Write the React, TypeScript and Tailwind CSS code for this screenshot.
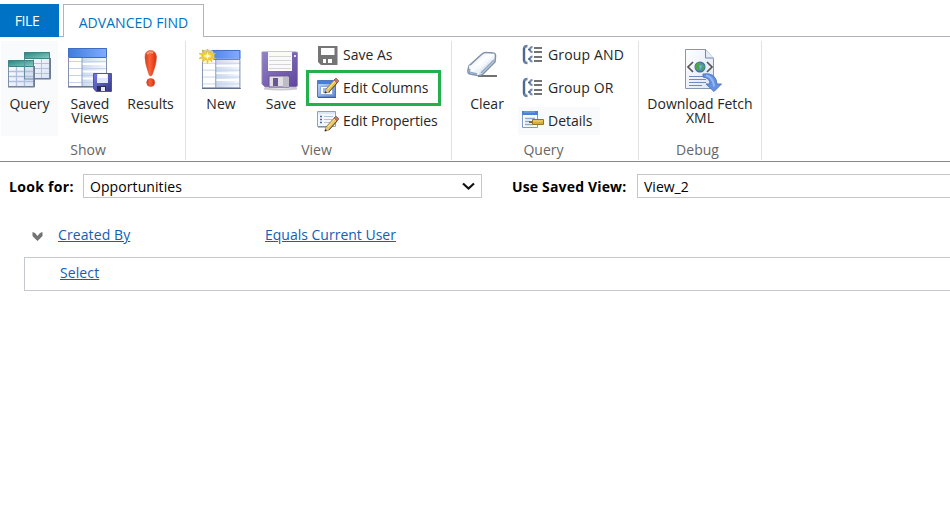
import type { ReactNode } from "react";

function QueryIcon() {
  return (
    <svg width="48" height="48" viewBox="0 0 48 48" fill="none">
      <defs>
        <linearGradient id="teal" x1="0" x2="1" y1="0" y2="1">
          <stop stopColor="#27847f" />
          <stop offset="1" stopColor="#8acbc4" />
        </linearGradient>
        <linearGradient id="sheet" x1="0" x2="1" y1="0" y2="1">
          <stop stopColor="#ffffff" />
          <stop offset="1" stopColor="#dbe4f4" />
        </linearGradient>
      </defs>
      <path d="M18.500 6.500h25v26h-25z" fill="url(#sheet)" stroke="#6f8799" />
      <path d="M19 12.500h24M19 17.500h24M19 22.500h24M19 27.500h24M27.500 13v19M35.500 13v19" stroke="#b3c1df" />
      <path d="M18.500 6.500h25v6h-25z" fill="url(#teal)" stroke="#3e8583" />
      <path d="M18 33h26.500V12" stroke="#6b7b93" />
      <path d="M2.500 14.500h25v26h-25z" fill="url(#sheet)" stroke="#7b8fa8" />
      <path d="M19 20h8v14h-8z" fill="#d7e1ef" />
      <path d="M3 25.500h24M3 30.500h24M3 35.500h24M10.500 21v19M18.500 21v19" stroke="#b0bfde" strokeWidth="1.300" />
      <path d="M2.500 14.500h25v6h-25z" fill="url(#teal)" stroke="#3e8583" />
      <path d="M2 41h26.500V20" stroke="#6b7b93" />
      <path d="M18.500 15v18h9" stroke="#688da0" />
    </svg>
  );
}

function TableArt() {
  return (
    <>
      <defs>
        <linearGradient id="header" x1="0" x2="1">
          <stop stopColor="#407bdc" />
          <stop offset="1" stopColor="#80acff" />
        </linearGradient>
        <linearGradient id="cells" x1="0" x2="1">
          <stop stopColor="#cbd8ec" />
          <stop offset="1" stopColor="#f6f9ff" />
        </linearGradient>
      </defs>
      <path d="M2 2h39v39H2z" fill="#fff" />
      <path d="M16 11h25v30H16z" fill="url(#cells)" />
      <path d="M2 15.500h39M2 22.500h39M2 29.500h39M2 36.500h39" stroke="#c5d4ed" />
      <path d="M16 18h25M16 25.500h25M16 32.500h25" stroke="#fff" strokeWidth="2" />
      <path d="M16 11v30" stroke="#849dc5" />
      <path d="M2 2h39v9H2z" fill="url(#header)" />
      <path d="M2.500 2.500h38v9h-38z" stroke="#426dbd" />
      <path d="M2.500 12v28.500h38V12" stroke="#8192ac" />
      <path d="M2 41h39.500" stroke="#4e617b" />
    </>
  );
}

function SavedViewsIcon() {
  return (
    <svg width="48" height="48" viewBox="0 0 48 48" fill="none">
      <TableArt />
      <defs>
        <linearGradient id="smalldisk" x2="1" y2="1">
          <stop stopColor="#777be9" />
          <stop offset="1" stopColor="#353587" />
        </linearGradient>
      </defs>
      <path d="M27.500 27.500h18v18H30l-2.500-3z" fill="url(#smalldisk)" stroke="#5450ac" />
      <path d="M31 28h11v9H31z" fill="#dfe8ff" />
      <path d="M32 28h9v4h-9z" fill="#fff" />
      <path d="M31 40h9v5H31z" fill="#292b58" />
      <path d="M35 41h4v4h-4z" fill="#e8e9f2" />
    </svg>
  );
}

function ResultsIcon() {
  return (
    <svg width="48" height="48" viewBox="0 0 48 48">
      <defs>
        <linearGradient id="alert" x1="0" x2="1">
          <stop stopColor="#c73d20" />
          <stop offset=".4" stopColor="#ff6034" />
          <stop offset="1" stopColor="#d22e10" />
        </linearGradient>
      </defs>
      <path d="M18 11Q18 4.500 23.500 4.500T29.500 11Q29.500 18 25.500 28Q25 30 23.500 30T21.500 27Q18 17 18 11Z" fill="url(#alert)" stroke="#ca573d" strokeWidth=".6" />
      <circle cx="23.700" cy="36.500" r="4" fill="url(#alert)" stroke="#bd452f" strokeWidth=".6" />
      <path d="M20 8q3-3 6-1" stroke="#ff9875" strokeWidth="2" fill="none" />
    </svg>
  );
}

function NewIcon() {
  return (
    <svg width="48" height="48" viewBox="0 0 48 48" fill="none">
      <g transform="translate(3 2) scale(.985)"><TableArt /></g>
      <circle cx="10.500" cy="10" r="7" fill="#fff7b0" fillOpacity=".7" />
      <path d="m10.500 3 1 4.500L15 4l-1.500 4 5-.5-4 2.500 4 2.500-5-.5L15 16l-3.500-3.500-1 5-1-5L5.500 16 7 12l-5 .5L6 10 2 7.500l5 .5-1.500-4 4 3.500Z" fill="#f7d63c" stroke="#e5bc28" strokeWidth=".8" />
      <path d="m10.500 6 1 3 3 1-3 1-1 3-1-3-3-1 3-1Z" fill="#fffde0" />
    </svg>
  );
}

function SaveIcon() {
  return (
    <svg width="48" height="48" viewBox="0 0 48 48" fill="none">
      <defs>
        <linearGradient id="purpledisk" x2="1" y2="1">
          <stop stopColor="#9282c9" />
          <stop offset="1" stopColor="#60449d" />
        </linearGradient>
      </defs>
      <path d="M7 42.500q17 2 33 0" stroke="#cbc9d0" strokeWidth="2" />
      <path d="M5 6h34q1.500 0 1.500 1v32q0 2-2 2H8l-3-3Z" fill="url(#purpledisk)" stroke="#9a8bbb" />
      <path d="M11 6h24v19H11z" fill="#fafafa" />
      <path d="M12 10.500h22M12 14.500h22M12 18.500h22M12 22.500h22" stroke="#d5d5d8" />
      <path d="M12 30h20v11H12z" fill="#dfdfe4" stroke="#6b5791" />
      <path d="M16 32h5v8h-5z" fill="#6a5595" />
      <path d="M26 31h6v10h-6z" fill="#bebdc7" />
      <path d="M37 9h2v2h-2z" fill="#e4ddef" />
    </svg>
  );
}

function SaveAsIcon() {
  return (
    <svg width="22" height="22" viewBox="0 0 22 22">
      <path d="M1 2h19.500v19H4l-3-3V2Zm3 2v7h13.500V4H4Zm2 11v4h3v-4H6Zm5 0v4h4v-4h-4Z" fill="#757575" fillRule="evenodd" />
    </svg>
  );
}

function Pencil() {
  return (
    <>
      <path d="m8 16 1-4L18 2l3 3-9 10Z" fill="#e8c25b" stroke="#8b713e" strokeWidth=".8" />
      <path d="m17 3 2-2 3 3-2 2Z" fill="#bd7771" stroke="#905650" strokeWidth=".7" />
      <path d="m8 16 1-4 3 3Z" fill="#e4c598" />
      <path d="m7.500 16.500 1-2.500 1.500 1.500Z" fill="#242424" />
      <path d="m11 12 7-8" stroke="#ffe79b" />
      <path d="m12 15 8-9" stroke="#5b4a31" />
    </>
  );
}

function EditColumnsIcon() {
  return (
    <svg width="22" height="22" viewBox="0 0 22 22" fill="none">
      <defs>
        <linearGradient id="windowblue" x2="1" y2="1">
          <stop stopColor="#c5d9fb" />
          <stop offset="1" stopColor="#5c87d5" />
        </linearGradient>
      </defs>
      <path d="M.5 3.500h18V20H.5z" fill="url(#windowblue)" stroke="#5277bd" />
      <path d="M1 4h17v3H1z" fill="#477ee1" />
      <path d="M3.500 9.500h12v8h-12z" fill="#fff" stroke="#8baae0" />
      <path d="M6 11h7v5H6z" fill="#98b7ea" />
      <path d="M1 20.500h18" stroke="#375c9f" />
      <Pencil />
    </svg>
  );
}

function EditPropertiesIcon() {
  return (
    <svg width="22" height="22" viewBox="0 0 22 22" fill="none">
      <path d="M.5 1.500h18v15H.5z" fill="#f4f7fc" stroke="#91a4b6" />
      <path d="M1 2h17v2H1z" fill="#d9e7f8" />
      <path d="M3 6.500h2M3 9.500h2M3 12.500h2" stroke="#466aaa" strokeWidth="1.500" />
      <path d="M7 6.500h9M7 9.500h8M7 12.500h6" stroke="#b4c2d5" />
      <path d="M1 17h12" stroke="#687f95" />
      <g transform="translate(0 5)"><Pencil /></g>
    </svg>
  );
}

function EraserIcon() {
  return (
    <svg width="48" height="48" viewBox="0 0 48 48">
      <defs>
        <linearGradient id="eraser" x2="1" y2="1">
          <stop stopColor="#cfe1fa" />
          <stop offset=".45" stopColor="#fff" />
          <stop offset="1" stopColor="#adbfd5" />
        </linearGradient>
      </defs>
      <path d="M15 30h19" stroke="#424242" strokeWidth="1.500" />
      <path d="M19 8q2-2 5-1.500l6 .5q3 .5 2.500 4l-.5 5-12 12q-2 2-5 1.500L7 28q-2.500-.5-2-4l1-4Z" fill="url(#eraser)" stroke="#8190a5" strokeWidth="1.500" />
      <path d="M6 20.500 16 22 31 8" fill="none" stroke="#f7fbff" strokeWidth="2.200" />
      <path d="m16 22-1 7" fill="none" stroke="#f1f6fd" strokeWidth="1.500" />
      <path d="m7 23-1 3 8 2M18 27 31 14" fill="none" stroke="#8da8c9" strokeWidth="1.500" />
    </svg>
  );
}

function GroupIcon() {
  return (
    <svg width="22" height="22" viewBox="0 0 22 22" fill="none">
      <path d="M5.500 2Q2 2 2 5v11q0 3 3.500 3" stroke="#6b81a2" strokeWidth="2.500" />
      <path d="M2 4v13" stroke="#45618b" strokeWidth="1.500" />
      <path d="M10.500 3Q8 3 8 5.500T10.500 8M10.500 12.500Q8 12.500 8 15t2.500 2.500" stroke="#718aaf" strokeWidth="2" />
      <path d="M6 5.500h2M6 15h2" stroke="#405b82" strokeWidth="1.500" />
      <path d="M12 4h8M12 8h8M12 13h8M12 17h8" stroke="#454545" strokeWidth="1.600" />
    </svg>
  );
}

function DetailsIcon() {
  return (
    <svg width="22" height="22" viewBox="0 0 22 22" fill="none">
      <path d="M.5 1.500h15v16H.5z" fill="#f9fcff" stroke="#7f9acd" />
      <path d="M0 1h16v4H0z" fill="#4b80d7" />
      <path d="M2 2h11" stroke="#83adee" />
      <path d="M3 8.500h10M3 11.500h5M3 14.500h8" stroke="#90a7cb" strokeWidth="1.500" />
      <path d="M7 12h5" stroke="#8a671e" strokeWidth="2" />
      <path d="M10.500 9.500h11v5h-11z" fill="#d4ad3d" stroke="#977428" />
      <path d="M11 11h10" stroke="#f7dd83" />
    </svg>
  );
}

function DownloadIcon() {
  return (
    <svg width="48" height="48" viewBox="0 0 48 48" fill="none">
      <defs>
        <linearGradient id="paper" x2="1" y2="1">
          <stop stopColor="#fff" />
          <stop offset="1" stopColor="#dbe5f3" />
        </linearGradient>
        <radialGradient id="globe">
          <stop stopColor="#83c4f0" />
          <stop offset="1" stopColor="#355faf" />
        </radialGradient>
      </defs>
      <path d="M9.500 3.500h20l8 9v30h-28z" fill="url(#paper)" stroke="#8197b5" />
      <path d="M29.500 3.500V12h8" fill="#e5edf8" stroke="#7188aa" />
      <path d="m17 16-5 5 5 5M31 16l5 5-5 5" stroke="#555" strokeWidth="1.700" />
      <circle cx="24" cy="21" r="5.500" fill="url(#globe)" />
      <path d="m20 18 3-2 2 2-2 2 1 2-2 3-3-3Zm6-1 3 3-1 3-2 2-1-3 2-2Z" fill="#4ba749" />
      <path d="M13 30.500h14M13 33.500h17M13 36.500h17M13 39.500h13" stroke="#7189bd" />
      <path d="M27 28q13-2 14 10h4.500l-7.500 7.500-8-7.500h4q0-6-7-7Z" fill="#6591e0" stroke="#4e78c6" />
      <path d="M30 29.500q7 1 8 11" stroke="#95b7f5" strokeWidth="2" />
    </svg>
  );
}

function BigButton({ icon, children, className }: { icon: ReactNode; children: ReactNode; className: string }) {
  return (
    <button className={`flex h-[95px] flex-col items-center pt-[5px] ${className}`}>
      {icon}
      <span className="mt-[3px] whitespace-nowrap text-center text-[14px] leading-[14px]">{children}</span>
    </button>
  );
}

function SmallButton({ icon, children, className }: { icon: ReactNode; children: ReactNode; className: string }) {
  return (
    <button className={`flex h-7 items-center gap-1 ${className}`}>
      <span className="shrink-0">{icon}</span>
      <span className="whitespace-nowrap text-[14px] leading-5">{children}</span>
    </button>
  );
}

function Group({ label, children, className, labelClass }: { label: string; children: ReactNode; className: string; labelClass: string }) {
  return (
    <section className={`flex h-[119px] flex-col border-r border-[#e1e1e1] ${className}`}>
      <div className="flex h-[95px]">{children}</div>
      <div className={`pt-1 text-center text-[14px] leading-5 text-[#666] ${labelClass}`}>{label}</div>
    </section>
  );
}

export default function App() {
  return (
    <main className="h-[517px] w-[950px] overflow-hidden bg-white font-['Open_Sans','Noto_Sans',sans-serif] text-[14px] text-[#262626]">
      <nav className="flex h-[37px] pt-1">
        <button className="h-[33px] w-[59px] bg-[#0072c6] pr-[5px] text-[14px] tracking-[-0.4px] text-white">FILE</button>
        <div className="w-1 border-b border-[#b1b5ba]" />
        <button className="w-[141px] border-x border-t border-[#b1b5ba] pt-[3px] text-[14px] tracking-[0.05px] text-[#0072c6]">ADVANCED FIND</button>
        <div className="flex-1 border-b border-[#b1b5ba]" />
      </nav>

      <div className="flex h-[125px] border-b border-[#888] pt-1">
        <Group label="Show" className="w-[186px] pl-px" labelClass="pr-[10px]">
          <BigButton icon={<QueryIcon />} className="w-[57px] bg-[#f8fafc]">Query</BigButton>
          <BigButton icon={<SavedViewsIcon />} className="w-16">Saved<br />Views</BigButton>
          <BigButton icon={<ResultsIcon />} className="w-[57px] tracking-[-0.1px]">Results</BigButton>
        </Group>
        <Group label="View" className="w-[266px] pl-[5px]" labelClass="pr-[9px]">
          <BigButton icon={<NewIcon />} className="w-[60px]">New</BigButton>
          <BigButton icon={<SaveIcon />} className="w-[60px]">Save</BigButton>
          <div className="relative flex flex-col gap-[5px] pl-[6px]">
            <SmallButton icon={<SaveAsIcon />} className="">Save As</SmallButton>
            <SmallButton icon={<EditColumnsIcon />} className="tracking-[-0.06px]">Edit Columns</SmallButton>
            <SmallButton icon={<EditPropertiesIcon />} className="tracking-[-0.12px]">Edit Properties</SmallButton>
            <div className="pointer-events-none absolute top-[29px] left-[-5px] h-9 w-[135px] border-[3px] border-[#22b14c]" />
          </div>
        </Group>
        <Group label="Query" className="w-[187px] pl-[5px]" labelClass="pr-[8px]">
          <BigButton icon={<EraserIcon />} className="w-[60px]">Clear</BigButton>
          <div className="flex flex-col items-start gap-[5px] pl-px">
            <SmallButton icon={<GroupIcon />} className="pl-1 tracking-[0.15px]">Group AND</SmallButton>
            <SmallButton icon={<GroupIcon />} className="pl-1 tracking-[0.1px]">Group OR</SmallButton>
            <SmallButton icon={<DetailsIcon />} className="w-[82px] bg-[#f8fafc] pl-1">Details</SmallButton>
          </div>
        </Group>
        <Group label="Debug" className="w-[123px]" labelClass="pr-[5px]">
          <BigButton icon={<DownloadIcon />} className="w-[122px]">Download Fetch<br />XML</BigButton>
        </Group>
      </div>

      <div className="flex h-12 items-center pl-[9px] text-black">
        <label className="w-[74px] text-[14px] font-bold tracking-[0.3px]">Look for:</label>
        <div className="flex h-6 w-[399px] items-center justify-between border border-[#c6c6c6] pr-[6px] pl-[6px]">
          <span className="tracking-[0.08px]">Opportunities</span>
          <svg width="13" height="8" viewBox="0 0 13 8" fill="none"><path d="m1 1.500 5.500 5 5.500-5" stroke="#111" strokeWidth="2.200" /></svg>
        </div>
        <label className="ml-[30px] w-[125px] whitespace-nowrap text-[14px] font-bold tracking-[0.16px]">Use Saved View:</label>
        <div className="flex h-6 flex-1 items-center border-y border-l border-[#c6c6c6] pl-[6px]">View_2</div>
      </div>
      <div className="flex h-[47px] items-center pt-[2px] pl-8 text-[#1160b7]">
        <svg className="mt-[3px] mr-[15px]" width="11" height="9" viewBox="0 0 11 9"><path d="M.5 0 3 1l2.500 3L8 1l2.500-1v4l-5 5-5-5Z" fill="#737373" /></svg>
        <a className="w-[207px] tracking-[0.1px] underline">Created By</a>
        <a className="underline">Equals Current User</a>
      </div>
      <div className="ml-6 flex h-[34px] items-center border-y border-l border-[#c5c9cf] pb-[4px] pl-[35px] text-[#1160b7]">
        <a className="tracking-[0.1px] underline">Select</a>
      </div>
    </main>
  );
}
